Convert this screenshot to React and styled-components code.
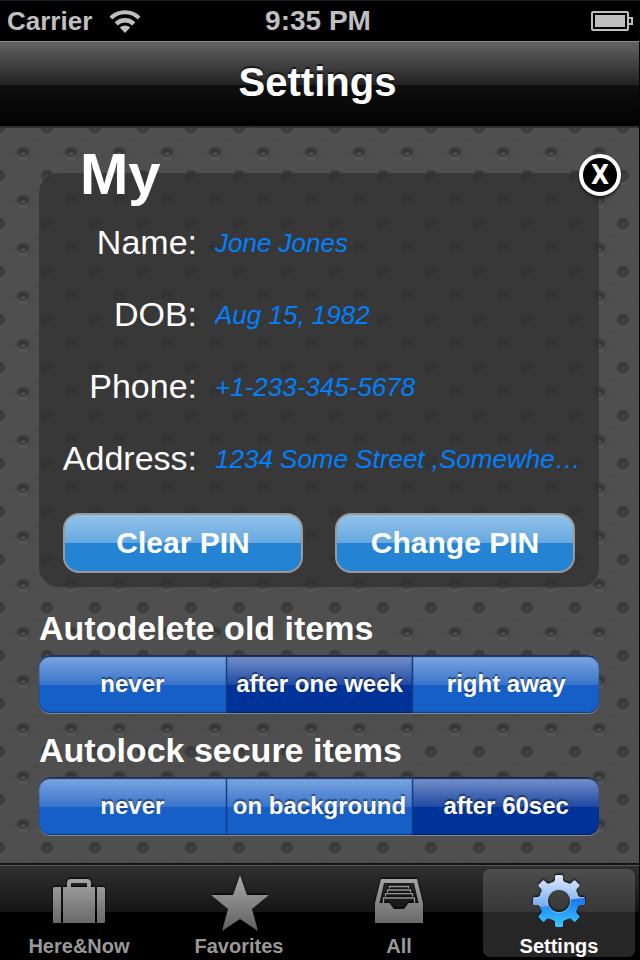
import { useState } from "react";
import styled, { createGlobalStyle, css } from "styled-components";

const GlobalStyle = createGlobalStyle`
  *, *::before, *::after {
    box-sizing: border-box;
  }
  body {
    margin: 0;
    background: #000;
    font-family: "Liberation Sans", Arial, sans-serif;
    color: #fff;
  }
  h1, h2 {
    margin: 0;
  }
  button, input {
    font-family: inherit;
  }
`;

const Screen = styled.div`
  min-height: 100vh;
  display: flex;
  flex-direction: column;
  background: #000;
  border-right: 1px solid #060606;
`;

const StatusBar = styled.div`
  display: grid;
  grid-template-columns: 1fr auto 1fr;
  align-items: center;
  height: 41px;
  padding: 0 6px 0 7px;
  border-top: 1px solid #1b1d22;
  color: #bfbfbf;
  font-weight: bold;
`;

const Carrier = styled.div`
  display: flex;
  align-items: center;
  gap: 17px;
  font-size: 26px;
`;

const Clock = styled.div`
  padding-right: 4px;
  font-size: 28px;
`;

const Battery = styled.svg`
  justify-self: end;
`;

const NavBar = styled.header`
  display: flex;
  align-items: center;
  justify-content: center;
  height: 87px;
  padding: 0 4px 4px 0;
  border-top: 1px solid #8a8a8a;
  border-bottom: 2px solid #2f2f2f;
  background: linear-gradient(#626262, #222 43px, #0f0f0f 43px, #000);
`;

const NavTitle = styled.h1`
  font-size: 40px;
  line-height: 48px;
  text-shadow: 0 -2px 1px rgba(0, 0, 0, 0.6);
`;

/* dimpled rubber: a row of flat holes and a row of craters, 48px apart */
const Content = styled.main`
  flex: 1;
  padding: 14px 40px 24px 39px;
  background-color: #4f4f4f;
  background-image:
    radial-gradient(ellipse 4px 3px at 24px 26px, #505050 30%, rgba(80, 80, 80, 0) 100%),
    radial-gradient(ellipse 7px 6px at 24px 24px, #363636 50%, #404040 80%, rgba(64, 64, 64, 0) 100%),
    radial-gradient(ellipse 7px 6px at 24px 27px, #5a5a5a 60%, rgba(90, 90, 90, 0) 100%),
    radial-gradient(ellipse 16px 8px at 24px 26px, rgba(66, 66, 66, 0.4), rgba(66, 66, 66, 0)),
    radial-gradient(circle at 24px 26px, #424242 3px, rgba(66, 66, 66, 0) 5px),
    radial-gradient(circle at 24px 24px, #383838 5px, rgba(56, 56, 56, 0) 7px),
    radial-gradient(circle at 24px 26px, #585858 5px, rgba(88, 88, 88, 0) 7px),
    radial-gradient(ellipse 8px 5px at 36px 13px, rgba(66, 66, 66, 0.3), rgba(66, 66, 66, 0));
  background-size: 48px 48px;
  background-position: -1px 0, -1px 0, -1px 0, -1px 0, 23px -24px, 23px -24px, 23px -24px, -1px 0;
`;

const Profile = styled.section`
  position: relative;
  display: flow-root;
  margin-top: 31px;
  padding: 0 24px 14px;
  border-radius: 20px;
  background: rgba(50, 50, 50, 0.77);
`;

const ProfileTitle = styled.h2`
  /* sits astride the top edge of the panel */
  margin: -31px 17px 0;
  font-size: 58px;
  line-height: 64px;
`;

const CloseButton = styled.button`
  position: absolute;
  top: -19px;
  right: -22px;
  width: 42px;
  height: 42px;
  padding: 0;
  border: 4px solid #fff;
  border-radius: 50%;
  background: #000;
  color: #fff;
  font-family: "DejaVu Sans Condensed", "DejaVu Sans", sans-serif;
  font-size: 26px;
  font-weight: bold;
  line-height: 34px;
  box-shadow: 0 2px 3px rgba(0, 0, 0, 0.6);
`;

const Field = styled.div`
  display: grid;
  grid-template-columns: 134px 1fr;
  column-gap: 18px;
  align-items: center;
  height: 72px;
  margin-right: -8px;
`;

const FieldLabel = styled.label`
  display: flex;
  justify-content: flex-end;
  font-size: 34px;
  line-height: 40px;
`;

const FieldInput = styled.input`
  width: 100%;
  min-width: 0;
  height: 40px;
  padding: 2px 0 0;
  border: 0;
  outline: 0;
  background: none;
  color: #0080ff;
  font-size: 26px;
  font-style: italic;
  text-overflow: ellipsis;
`;

const PinActions = styled.div`
  display: grid;
  grid-template-columns: 1fr 1fr;
  gap: 32px;
  margin-top: 19px;
`;

const PinButton = styled.button`
  height: 60px;
  padding: 0;
  border: 2px solid #999;
  border-radius: 16px;
  background: linear-gradient(#92c3ea, #66a8df 28px, #2483d2 28px, #2483d2);
  color: #fff;
  font-size: 30px;
  font-weight: bold;
`;

const Option = styled.section`
  margin-top: ${props => (props.$first ? 21 : 17)}px;
`;

const OptionTitle = styled.h2`
  font-size: 34px;
  line-height: 40px;
`;

const Segments = styled.div`
  display: grid;
  grid-template-columns: repeat(3, 1fr);
  height: 58px;
  margin-top: 7px;
  overflow: hidden;
  border-radius: 11px;
  box-shadow: 0 1px 0 #858585;
`;

const Segment = styled.label`
  display: flex;
  align-items: center;
  justify-content: center;
  font-size: 24px;
  font-weight: bold;
  white-space: nowrap;
  text-shadow: 0 -2px 1px rgba(0, 0, 0, 0.45);
  background: linear-gradient(#7ea8e0, #3873cb 30px, #165fc7 30px, #165fc7);
  box-shadow: inset 0 2px 1px #1b315c, inset 0 -1px 1px #0c3c8d;

  &:first-child {
    border-radius: 11px 0 0 11px;
  }
  &:last-child {
    border-radius: 0 11px 11px 0;
  }
  & + & {
    border-left: 1px solid #0f3d86;
  }

  ${props =>
    props.$selected &&
    css`
      background: linear-gradient(#7893cd, #1f48a1 30px, #003399 30px, #003399);
      box-shadow: inset 0 2px 1px #1a2649, inset 0 -1px 1px #00206b;
    `}

  input {
    position: absolute;
    opacity: 0;
    pointer-events: none;
  }
`;

const TabBar = styled.nav`
  display: grid;
  grid-template-columns: repeat(4, 1fr);
  gap: 8px;
  padding: 4px 4px 3px 3px;
  border-top: 2px solid #141414;
  background: linear-gradient(#555 1px, #303030 1px, #151515 47px, #000 47px);
`;

const Tab = styled.button`
  display: flex;
  flex-direction: column;
  align-items: center;
  height: 88px;
  padding: 4px 0 0;
  border: 0;
  border-radius: 7px;
  background: ${props => (props.$active ? "rgba(255, 255, 255, 0.15)" : "none")};
  color: ${props => (props.$active ? "#fff" : "#999")};
  font-size: 20px;
  font-weight: bold;
  line-height: 26px;
`;

const TabIcon = styled.svg`
  display: block;
  width: 60px;
  height: 60px;
  overflow: visible;
  filter: drop-shadow(0 -1px 1px #000);
`;

const WifiIcon = () => (
  <svg width="32" height="24" viewBox="0 0 32 24" fill="none" stroke="currentColor" aria-hidden="true">
    <path d="M1.9 9 A20 20 0 0 1 30.1 9" strokeWidth="4" />
    <path d="M7.2 14.8 A12.5 12.5 0 0 1 24.8 14.8" strokeWidth="4.500" />
    <path d="M16 24 L10.800 18.500 A7.500 7.500 0 0 1 21.200 18.500 Z" fill="currentColor" stroke="none" />
  </svg>
);

const BatteryIcon = () => (
  <Battery width="42" height="20" viewBox="0 0 42 20" fill="none" stroke="currentColor" aria-hidden="true">
    <rect x="1" y="1" width="36" height="18" rx="1" strokeWidth="2" />
    <rect x="4" y="4" width="30" height="12" fill="currentColor" stroke="none" />
    <path d="M37 7 H41 V13 H37" strokeWidth="2" />
  </Battery>
);

const Grey = ({ id }) => (
  <linearGradient id={id} gradientUnits="userSpaceOnUse" x1="0" y1="4" x2="0" y2="56">
    <stop offset="0" stopColor="#a6a6a6" />
    <stop offset="1" stopColor="#626262" />
  </linearGradient>
);

const SuitcaseIcon = () => (
  <TabIcon viewBox="0 0 60 60" aria-hidden="true">
    <Grey id="suitcase" />
    <g fill="url(#suitcase)">
      <path d="M12 14 V50 H5.500 Q4 50 4 48.500 V15.500 Q4 14 5.500 14 Z" />
      <path d="M14 14 H18 V10 Q18 6 22 6 H38 Q42 6 42 10 V14 H46 V50 H14 Z M22 14 H38 V11 Q38 10 37 10 H23 Q22 10 22 11 Z" fillRule="evenodd" />
      <path d="M48 14 H54.500 Q56 14 56 15.500 V48.500 Q56 50 54.500 50 H48 Z" />
    </g>
  </TabIcon>
);

const StarIcon = () => (
  <TabIcon viewBox="0 0 60 60" aria-hidden="true">
    <Grey id="star" />
    <path fill="url(#star)" d="M31 2 L38 22 L60 22 L43 36 L49 58 L31 46 L13 58 L19 36 L2 22 L24 22 Z" />
  </TabIcon>
);

const TrayIcon = () => (
  <TabIcon viewBox="0 0 60 60" aria-hidden="true">
    <Grey id="tray" />
    <path
      fill="url(#tray)"
      fillRule="evenodd"
      d="M12 6 H48 L54 30 V50 H6 V30 Z M15 10 L10.500 30 H20.500 L25 36 H35 L39.500 30 H49.500 L45 10 Z"
    />
    <g fill="none" stroke="#929292" strokeWidth="1.300">
      <path d="M20.500 15.500 V13.500 H39.500 V15.500" />
      <path d="M18.500 19.500 V17 H41.500 V19.500" />
      <path d="M16.500 23.500 V20.700 H43.500 V23.500" />
      <path d="M14.500 30 V25 H45.500 V30" />
    </g>
  </TabIcon>
);

const teeth = [0, 45, 90, 135, 180, 225, 270, 315];

const GearIcon = () => (
  <TabIcon viewBox="0 0 60 60" aria-hidden="true">
    <linearGradient id="gear-base" x1="0" y1="0" x2="0" y2="1">
      <stop offset="0.45" stopColor="#1a74ee" />
      <stop offset="0.95" stopColor="#37c3ff" />
    </linearGradient>
    <linearGradient id="gear-gloss" x1="0" y1="0" x2="0" y2="1">
      <stop offset="0" stopColor="#dfeafc" />
      <stop offset="1" stopColor="#72a9ec" />
    </linearGradient>
    <mask id="gear-shape">
      <circle cx="30" cy="28" r="20" fill="#fff" />
      {teeth.map(angle => (
        <path
          key={angle}
          d="M24 10 L26 7 V3.500 Q26 2 27.500 2 H32.500 Q34 2 34 3.500 V7 L36 10 Z"
          fill="#fff"
          transform={`rotate(${angle} 30 28)`}
        />
      ))}
      <circle cx="30" cy="28" r="11" fill="#000" />
    </mask>
    <g mask="url(#gear-shape)">
      <rect x="4" y="2" width="52" height="52" fill="url(#gear-base)" />
      <path d="M4 2 H56 V25 Q40 26 28 30 Q18 34 4 35 Z" fill="url(#gear-gloss)" />
      <circle cx="30" cy="28" r="11" fill="none" stroke="#8ecbff" strokeOpacity="0.6" strokeWidth="2" />
    </g>
  </TabIcon>
);

const fields = [
  { id: "name", label: "Name:", value: "Jone Jones" },
  { id: "dob", label: "DOB:", value: "Aug 15, 1982" },
  { id: "phone", label: "Phone:", value: "+1-233-345-5678" },
  { id: "address", label: "Address:", value: "1234 Some Street ,Somewhe…" },
];

const tabs = [
  { name: "Here&Now", Icon: SuitcaseIcon },
  { name: "Favorites", Icon: StarIcon },
  { name: "All", Icon: TrayIcon },
  { name: "Settings", Icon: GearIcon },
];

const SegmentedOption = ({ id, title, choices, initial, first }) => {
  const [value, setValue] = useState(initial);

  return (
    <Option $first={first}>
      <OptionTitle id={id}>{title}</OptionTitle>
      <Segments role="radiogroup" aria-labelledby={id}>
        {choices.map(choice => (
          <Segment key={choice} $selected={choice === value}>
            <input
              type="radio"
              name={id}
              checked={choice === value}
              onChange={() => setValue(choice)}
            />
            {choice}
          </Segment>
        ))}
      </Segments>
    </Option>
  );
};

const App = () => {
  const [active, setActive] = useState("Settings");

  return (
    <Screen>
      <GlobalStyle />
      <StatusBar>
        <Carrier>
          Carrier
          <WifiIcon />
        </Carrier>
        <Clock>9:35 PM</Clock>
        <BatteryIcon />
      </StatusBar>
      <NavBar>
        <NavTitle>Settings</NavTitle>
      </NavBar>
      <Content>
        <Profile>
          <ProfileTitle>My</ProfileTitle>
          <CloseButton aria-label="Close">X</CloseButton>
          {fields.map(({ id, label, value }) => (
            <Field key={id}>
              <FieldLabel htmlFor={id}>{label}</FieldLabel>
              <FieldInput id={id} type="text" defaultValue={value} />
            </Field>
          ))}
          <PinActions>
            <PinButton>Clear PIN</PinButton>
            <PinButton>Change PIN</PinButton>
          </PinActions>
        </Profile>
        <SegmentedOption
          first
          id="autodelete"
          title="Autodelete old items"
          choices={["never", "after one week", "right away"]}
          initial="after one week"
        />
        <SegmentedOption
          id="autolock"
          title="Autolock secure items"
          choices={["never", "on background", "after 60sec"]}
          initial="after 60sec"
        />
      </Content>
      <TabBar>
        {tabs.map(({ name, Icon }) => (
          <Tab key={name} $active={name === active} onClick={() => setActive(name)}>
            <Icon />
            {name}
          </Tab>
        ))}
      </TabBar>
    </Screen>
  );
};

export default App;
